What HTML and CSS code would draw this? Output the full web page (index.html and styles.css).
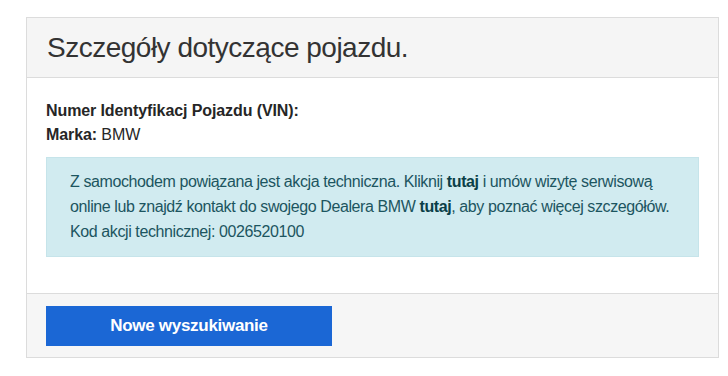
FILE: index.html
```html
<!DOCTYPE html>
<html lang="pl">
<head>
<meta charset="utf-8">
<title>Szczegóły dotyczące pojazdu</title>
<link rel="stylesheet" href="styles.css">
</head>
<body>
<div class="page">
  <section class="card">
    <header class="card-header">
      <h1 class="card-title">Szczegóły dotyczące pojazdu.</h1>
    </header>
    <div class="card-body">
      <p class="field"><strong>Numer Identyfikacj Pojazdu (VIN):</strong></p>
      <p class="field"><strong>Marka:</strong> BMW</p>
      <div class="alert">
        <p>Z samochodem powiązana jest akcja techniczna. Kliknij <a class="alert-link" href="#">tutaj</a> i umów wizytę serwisową<br>online lub znajdź kontakt do swojego Dealera BMW <a class="alert-link" href="#">tutaj</a>, aby poznać więcej szczegółów.<br>Kod akcji technicznej: 0026520100</p>
      </div>
    </div>
    <footer class="card-footer">
      <button class="btn-primary" type="button">Nowe wyszukiwanie</button>
    </footer>
  </section>
</div>
</body>
</html>
```

FILE: styles.css
```css
* { box-sizing: border-box; }
html, body { margin: 0; padding: 0; background: #fff; }
body {
  font-family: "Liberation Sans", Arial, sans-serif;
  color: #262626;
}
.page {
  padding: 17px 10px 0 26px;
}
.card {
  width: 693px;
  border: 1px solid #dcdcdc;
  background: #fff;
}
.card-header {
  height: 60px;
  background: #f5f5f5;
  border-bottom: 1px solid #dcdcdc;
  padding: 0 20px;
  display: flex;
  align-items: center;
}
.card-title {
  margin: 0;
  font-size: 28px;
  font-weight: 400;
  color: #333;
  letter-spacing: -0.5px;
}
.card-body {
  padding: 21px 19px 36px 19px;
}
.field {
  margin: 0;
  font-size: 16px;
  line-height: 24px;
  letter-spacing: -0.1px;
}
.field strong { font-weight: 700; }
.alert {
  margin-top: 10px;
  background: #d1ebf0;
  border: 1px solid #c6e4ea;
  color: #1c5560;
  padding: 11px 14px 12px 23px;
}
.alert p {
  margin: 0;
  font-size: 16px;
  line-height: 25px;
  letter-spacing: -0.4px;
  white-space: nowrap;
}
.alert-link {
  color: #0b3f48;
  font-weight: 700;
  text-decoration: none;
}
.card-footer {
  background: #f6f6f6;
  border-top: 1px solid #dcdcdc;
  padding: 12px 19px 11px 19px;
}
.btn-primary {
  display: block;
  width: 286px;
  height: 40px;
  border: none;
  background: #1b67d5;
  color: #fff;
  font-family: "Liberation Sans", Arial, sans-serif;
  font-size: 17px;
  font-weight: 700;
  letter-spacing: -0.3px;
  cursor: pointer;
}
```
